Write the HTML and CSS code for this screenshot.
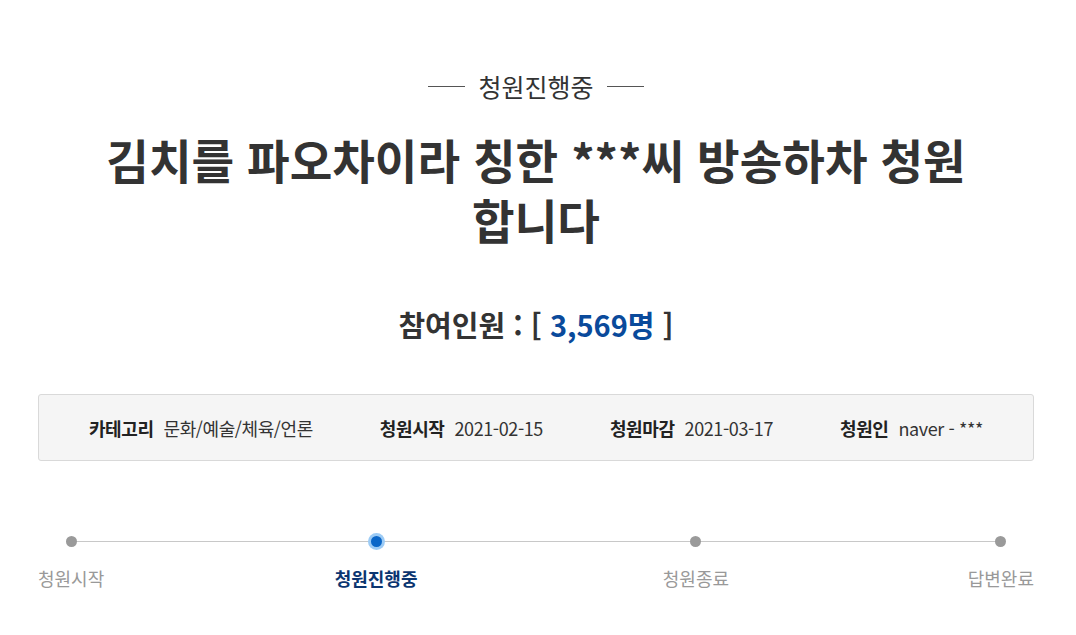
FILE: index.html
```html
<!DOCTYPE html>
<html lang="ko">
<head>
<meta charset="utf-8">
<link rel="stylesheet" href="styles.css">
</head>
<body>
<main class="petition">
  <p class="status"><span class="rule"></span>청원진행중<span class="rule"></span></p>
  <h1 class="title">김치를 파오차이라 칭한 ***씨 방송하차 청원<br>합니다</h1>
  <p class="count">참여인원 : [ <span class="num">3,569명</span> ]</p>
  <ul class="info">
    <li><strong>카테고리</strong>문화/예술/체육/언론</li>
    <li><strong>청원시작</strong>2021-02-15</li>
    <li><strong>청원마감</strong>2021-03-17</li>
    <li><strong>청원인</strong>naver - ***</li>
  </ul>
  <ol class="steps">
    <li class="step"><span class="dot"></span><span class="label">청원시작</span></li>
    <li class="step mid active"><span class="dot"></span><span class="label">청원진행중</span></li>
    <li class="step mid"><span class="dot"></span><span class="label">청원종료</span></li>
    <li class="step"><span class="dot"></span><span class="label">답변완료</span></li>
  </ol>
</main>
</body>
</html>
```

FILE: styles.css
```css
* { box-sizing: border-box; }
html, body { margin: 0; padding: 0; background: #fff; }
body {
  font-family: "Noto Sans CJK KR", "Noto Sans", sans-serif;
  color: #333;
}
.petition {
  width: 996px;
  margin-left: 38px;
  padding-top: 68px;
}
.status {
  margin: 0;
  display: flex;
  justify-content: center;
  align-items: center;
  gap: 13px;
  font-size: 25px;
  line-height: 36px;
  color: #333;
}
.rule {
  display: block;
  width: 37px;
  height: 1px;
  background: #555;
}
.title {
  margin: 25px 0 0;
  text-align: center;
  font-size: 46.3px;
  font-weight: 700;
  line-height: 60px;
  color: #333;
}
.count {
  margin: 55px 0 0;
  text-align: center;
  font-size: 29px;
  font-weight: 700;
  line-height: 40px;
  color: #333;
}
.count .num { color: #0a4a9b; }
.info {
  list-style: none;
  margin: 50px 0 0;
  padding: 0;
  height: 67px;
  display: flex;
  justify-content: center;
  align-items: center;
  gap: 67px;
  background: #f5f5f5;
  border: 1px solid #d9d9d9;
  border-radius: 3px;
  font-size: 18px;
  color: #333;
  letter-spacing: -0.4px;
}
.info strong {
  font-weight: 700;
  color: #222;
  margin-right: 10px;
}
.steps {
  list-style: none;
  margin: 70px 0 0;
  padding: 0;
  display: flex;
  justify-content: space-between;
  background: linear-gradient(#c8c8c8, #c8c8c8) no-repeat 34px 10px / calc(100% - 68px) 1px;
}
.step {
  display: flex;
  flex-direction: column;
  align-items: center;
  gap: 19px;
}
.step.mid { width: 96px; }
.dot {
  display: block;
  width: 11px;
  height: 11px;
  margin-top: 5px;
  border-radius: 50%;
  background: #9a9a9a;
}
.active .dot {
  background: #0a66c8;
  box-shadow: 0 0 0 3px #9ccbf5;
}
.label {
  font-size: 18px;
  line-height: 24px;
  color: #999;
}
.active .label {
  color: #0b3570;
  font-weight: 700;
}
```
